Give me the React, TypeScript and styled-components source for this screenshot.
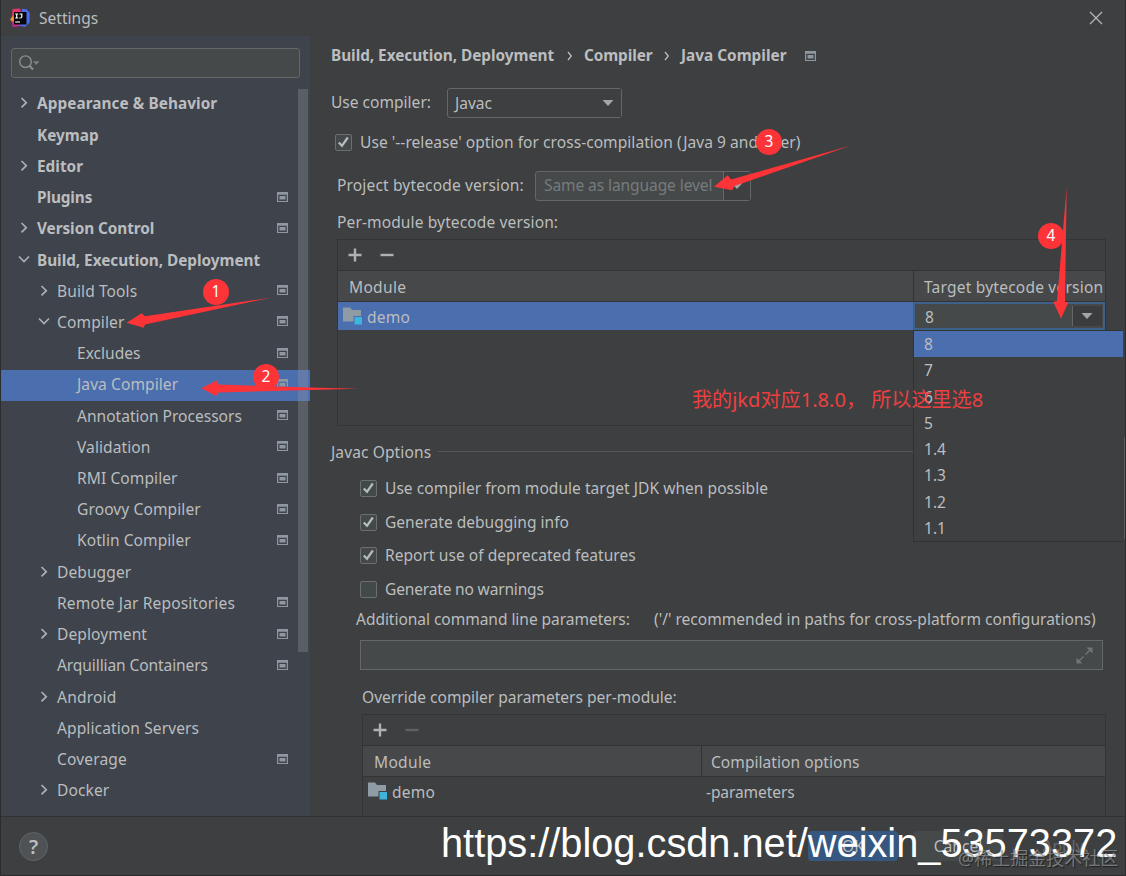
import React from 'react';
import styled, { createGlobalStyle, css } from 'styled-components';

const GlobalStyle = createGlobalStyle`
  * { box-sizing: border-box; }
  body {
    margin: 0;
    background: #3d3f40;
    color: #bbbdbf;
    font-family: 'Noto Sans', 'Noto Sans CJK SC', sans-serif;
    font-size: 15.55px;
    overflow: hidden;
  }
`;

const Window = styled.div`
  position: relative;
  display: flex;
  flex-direction: column;
  width: 1126px;
  height: 876px;
  background: #3d3f40;
  border: solid #2b2c2e;
  border-width: 0 1px 1px 1px;
  overflow: hidden;
`;

const Text = styled.span<{ $ls?: number; $bold?: boolean; $dim?: boolean }>`
  white-space: pre;
  line-height: 22px;
  letter-spacing: ${(p) => p.$ls ?? 0}px;
  font-weight: ${(p) => (p.$bold ? 700 : 400)};
  ${(p) => p.$bold && css`font-size: 15.35px;`}
  ${(p) => p.$dim && css`color: #777b7c;`}
`;

/* ---------- title bar ---------- */

const TitleBar = styled.header`
  display: flex;
  align-items: center;
  flex: none;
  height: 36px;
  padding: 0 22px 0 8px;
  svg:last-child { margin-left: auto; }
`;

const Title = styled(Text)`
  margin-left: 8px;
`;

/* ---------- body ---------- */

const Body = styled.div`
  display: flex;
  flex: none;
  height: 780px;
`;

const Sidebar = styled.aside`
  position: relative;
  display: flex;
  flex-direction: column;
  width: 309px;
  background: #3e434c;
`;

const SearchBox = styled.div`
  display: flex;
  align-items: center;
  flex: none;
  width: 289px;
  height: 30px;
  margin: 12px 0 10.9px 10px;
  padding-left: 6px;
  background: #45494a;
  border: 1px solid #646869;
  border-radius: 3px;
`;

const TreeRow = styled.div<{ $level: number; $selected?: boolean }>`
  display: flex;
  align-items: center;
  flex: none;
  height: 31.23px;
  padding: 0 22px 2.2px ${(p) => 15 + p.$level * 20}px;
  background: ${(p) => (p.$selected ? '#4b6eaf' : 'transparent')};
`;

const Chevron = styled.span`
  display: flex;
  width: 21px;
`;

const RowIcon = styled.span`
  display: flex;
  margin-left: auto;
  padding-bottom: 1px;
`;

const ScrollThumb = styled.div`
  position: absolute;
  left: 297px;
  top: 53px;
  width: 10px;
  height: 563px;
  background: rgba(150, 153, 155, 0.32);
`;

const Content = styled.main`
  display: flex;
  flex-direction: column;
  flex: 1;
  padding-left: 21px;
`;

const Line = styled.div<{ $h: number; $mt?: number; $pl?: number }>`
  display: flex;
  align-items: center;
  flex: none;
  height: ${(p) => p.$h}px;
  margin-top: ${(p) => p.$mt ?? 0}px;
  padding-left: ${(p) => p.$pl ?? 0}px;
`;

const Crumb = styled(Text)<{ $w: number }>`
  width: ${(p) => p.$w}px;
  padding-bottom: 2px;
`;

const Separator = styled.span`
  display: flex;
  justify-content: center;
  width: 30px;
  padding-left: 2px;
`;

const Label = styled(Text)<{ $w?: number }>`
  flex: none;
  width: ${(p) => (p.$w ? p.$w + 'px' : 'auto')};
  padding-bottom: 2px;
`;

const Combo = styled.div<{ $w: number; $filled?: boolean }>`
  display: flex;
  align-items: center;
  width: ${(p) => p.$w}px;
  height: 30px;
  padding-left: ${(p) => (p.$filled ? 8 : 7)}px;
  border: 1px solid #646869;
  border-radius: 3px;
  background: ${(p) => (p.$filled ? '#45494a' : '#3d3f40')};
`;

const ComboArrow = styled.span<{ $split?: boolean }>`
  display: flex;
  align-items: center;
  justify-content: center;
  width: 27px;
  height: 100%;
  margin-left: auto;
  background: #3d3f40;
  border-left: ${(p) => (p.$split ? '1px solid #646869' : 'none')};
`;

const Box = styled.span`
  display: flex;
  align-items: center;
  justify-content: center;
  flex: none;
  width: 17px;
  height: 17px;
  margin-right: 8px;
  background: #43494a;
  border: 1px solid #6b6f70;
  border-radius: 2px;
`;

const Table = styled.div<{ $ml: number; $h: number; $open?: boolean }>`
  display: flex;
  flex-direction: column;
  flex: none;
  width: ${(p) => 775 - p.$ml}px;
  height: ${(p) => p.$h}px;
  margin-left: ${(p) => p.$ml}px;
  border: 1px solid #323435;
  ${(p) => p.$open && css`border-bottom: none;`}
`;

const Toolbar = styled.div`
  display: flex;
  align-items: center;
  gap: 18px;
  flex: none;
  height: 31px;
  padding-left: 10px;
  border-bottom: 1px solid #323435;
`;

const HeadRow = styled.div`
  display: flex;
  flex: none;
  height: 31px;
  background: #464849;
  border-bottom: 1px solid #323435;
`;

const Cell = styled.div<{ $w?: number; $pl: number; $line?: boolean }>`
  position: relative;
  display: flex;
  align-items: center;
  flex: ${(p) => (p.$w ? 'none' : 1)};
  width: ${(p) => (p.$w ? p.$w + 'px' : 'auto')};
  padding-left: ${(p) => p.$pl}px;
  border-right: ${(p) => (p.$line ? '1px solid #323435' : 'none')};
  svg { margin-right: 4px; }
  span { padding-top: 2px; }
`;

const DataRow = styled.div<{ $selected?: boolean }>`
  display: flex;
  flex: none;
  height: 28px;
  ${(p) => p.$selected && css`background: #4b6eaf;`}
`;

const Editor = styled.div`
  position: relative;
  display: flex;
  align-items: center;
  flex: 1;
  padding-left: 10px;
  background: #45494a;
  border: 2px solid #3d6188;
  > span:first-child { padding-top: 2px; }
`;

const EditorArrow = styled.span`
  display: flex;
  align-items: center;
  justify-content: center;
  width: 30px;
  height: 20px;
  margin: 0 1px 0 auto;
  padding-right: 2px;
  background: #3a3c3e;
  border-left: 1px solid #646869;
`;

const Popup = styled.ul`
  position: absolute;
  left: -2px;
  top: 26px;
  z-index: 2;
  width: 210px;
  margin: 0;
  padding: 0;
  list-style: none;
  background: #3d3f40;
  border: solid #303233;
  border-width: 1px 0 1px 1px;
`;

const Option = styled.li<{ $selected?: boolean }>`
  display: flex;
  align-items: center;
  height: 26.25px;
  padding-left: 10px;
  background: ${(p) => (p.$selected ? '#4b6eaf' : 'transparent')};
`;

const Rule = styled.span`
  flex: 1;
  height: 1px;
  margin: 0 20px 3px 7px;
  background: #55585a;
`;

const Input = styled.div`
  display: flex;
  align-items: center;
  justify-content: flex-end;
  flex: none;
  width: 743px;
  height: 30px;
  margin-left: 29px;
  padding-right: 9px;
  background: #45494a;
  border: 1px solid #646869;
`;

const PaneThumb = styled.div`
  position: absolute;
  right: -1px;
  top: 437px;
  width: 2px;
  height: 102px;
  background: #5a5d5e;
`;

/* ---------- footer ---------- */

const Footer = styled.footer`
  display: flex;
  align-items: center;
  flex: 1;
  padding: 0 17px 0 18px;
  border-top: 1px solid #2f3132;
`;

const Help = styled.span`
  display: flex;
  align-items: center;
  justify-content: center;
  width: 29px;
  height: 29px;
  margin-right: auto;
  border: 1px solid #626567;
  border-radius: 50%;
  background: #4e5254;
  font: 600 20px 'Noto Sans', sans-serif;
`;

const Button = styled.span<{ $kind: 'primary' | 'plain' | 'disabled' }>`
  display: flex;
  align-items: center;
  justify-content: center;
  width: 90px;
  height: 30px;
  margin-left: 15px;
  border-radius: 4px;
  background: ${(p) => (p.$kind === 'primary' ? '#365880' : p.$kind === 'plain' ? '#45494a' : 'transparent')};
  color: ${(p) => (p.$kind === 'disabled' ? '#66696b' : '#bbbdbf')};
`;

/* ---------- overlays ---------- */

const Arrows = styled.svg`
  position: absolute;
  left: -1px;
  top: 0;
  z-index: 3;
`;

const Badge = styled.span<{ $x: number; $y: number }>`
  position: absolute;
  left: ${(p) => p.$x - 14}px;
  top: ${(p) => p.$y - 13}px;
  z-index: 4;
  width: 26px;
  height: 26px;
  border-radius: 50%;
  background: #fc3438;
  color: #fff;
  text-align: center;
  font-size: 15.5px;
  line-height: 24px;
`;

const Note = styled.span`
  position: absolute;
  left: 691px;
  top: 385px;
  z-index: 4;
  color: #ee3f40;
  font-size: 20.1px;
  line-height: 30px;
  white-space: pre;
`;

const UrlMark = styled.span`
  position: absolute;
  left: 440px;
  top: 820px;
  z-index: 5;
  color: #fff;
  font: 39.75px/46px 'Liberation Sans', sans-serif;
  white-space: pre;
`;

const SiteMark = styled.span`
  position: absolute;
  left: 957px;
  top: 845px;
  z-index: 6;
  color: rgba(190, 192, 194, 0.5);
  text-shadow: 1px 1px 1px rgba(0, 0, 0, 0.5);
  font-size: 18px;
  line-height: 26px;
  white-space: pre;
`;

/* ---------- icons ---------- */

const Logo = () => (
  <svg width="22" height="20" viewBox="0 0 22 20">
    <path d="M3.500 1 L11 0.500 L13 8 L7 13 L2 11.500 L3 8 Z" fill="#e8336d" />
    <path d="M1 11.500 L4 7.500 L7 14 L4 15 Z" fill="#f28a3c" />
    <path d="M3 13.500 L9 13 L13 18 L3.500 19 Z" fill="#c22c8f" />
    <path d="M13 0.800 L17.500 1.200 L20.800 5 L20.500 14.500 L16 19 L10 17.500 Z" fill="#4a6cf0" />
    <rect x="5" y="4" width="12.500" height="12.500" fill="#08080a" />
    <path d="M6.200 6 H9.200 M7.700 6 V10 M6.200 10 H9.200 M10.500 6 H12.800 V9 Q12.600 10.100 10.300 10" stroke="#fff" strokeWidth="1.200" fill="none" />
    <path d="M6.200 14 H11" stroke="#fff" strokeWidth="1.100" />
  </svg>
);

const Close = () => (
  <svg width="14" height="14" viewBox="0 0 14 14">
    <path d="M1 1 L13 13 M13 1 L1 13" stroke="#b4b6b8" strokeWidth="1.300" />
  </svg>
);

const SearchIcon = () => (
  <svg width="24" height="18" viewBox="0 0 24 18">
    <circle cx="7.500" cy="7.700" r="5.800" fill="none" stroke="#8b8f91" strokeWidth="1.400" />
    <path d="M11.500 11.700 L15 15.500" stroke="#8b8f91" strokeWidth="2" />
    <path d="M15 7.300 H21.500 L18.200 11 Z" fill="#7d8183" />
  </svg>
);

const Right = () => (
  <svg width="16" height="14" viewBox="0 0 16 14">
    <path d="M5.500 2 L10.300 6.700 L5.500 11.400" stroke="#adb0b3" strokeWidth="1.700" fill="none" />
  </svg>
);

const Down = () => (
  <svg width="16" height="14" viewBox="0 0 16 14">
    <path d="M3 3.500 L8 8.500 L13 3.500" stroke="#adb0b3" strokeWidth="1.700" fill="none" />
  </svg>
);

const Scope = () => (
  <svg width="11" height="10" viewBox="0 0 11 10">
    <path fillRule="evenodd" d="M0 0 H11 V10 H0 Z M1.200 2.700 V8.900 H9.800 V2.700 Z" fill="#8f979f" />
    <rect x="2.500" y="4" width="6" height="3.500" fill="#8f979f" />
  </svg>
);

const Tri = () => (
  <svg width="12" height="8" viewBox="0 0 12 8">
    <path d="M0.500 1 H11.500 L6 7 Z" fill="#a3a6a8" />
  </svg>
);

const Check = () => (
  <svg width="13" height="13" viewBox="0 0 13 13">
    <path d="M1.800 6.500 L5 9.800 L10.800 1.500" stroke="#b8babb" strokeWidth="2.300" fill="none" />
  </svg>
);

const Plus = () => (
  <svg width="14" height="14" viewBox="0 0 14 14">
    <path d="M7 0.500 V13.500 M0.500 7 H13.500" stroke="#afb1b3" strokeWidth="2.400" />
  </svg>
);

const Minus = ({ dim }: { dim?: boolean }) => (
  <svg width="14" height="14" viewBox="0 0 14 14">
    <path d="M0.500 7 H13.500" stroke={dim ? '#5f6264' : '#afb1b3'} strokeWidth="2.400" />
  </svg>
);

const Folder = () => (
  <svg width="20" height="18" viewBox="0 0 20 18">
    <path d="M0 0.500 H7 L9 3 H18 V9 H10.500 V14.500 H0 Z" fill="#8f9ba5" />
    <rect x="11.500" y="10" width="7.500" height="7.500" fill="#3fb4dc" />
  </svg>
);

const Expand = () => (
  <svg width="17" height="17" viewBox="0 0 17 17">
    <path d="M10.500 0.500 H16.500 V6.500 Z M0.500 10.500 V16.500 H6.500 Z" fill="#6f7476" />
    <path d="M14 3 L9.500 7.500 M3 14 L7.500 9.500" stroke="#6f7476" strokeWidth="1.400" />
  </svg>
);

const CrumbArrow = () => (
  <svg width="6" height="10" viewBox="0 0 6 10">
    <path d="M1 1 L4.300 5 L1 9" stroke="#bbbdbf" strokeWidth="1.300" fill="none" />
  </svg>
);

/* ---------- data ---------- */

type Node = { t: string; l: number; a?: 'r' | 'd'; s?: boolean; b?: boolean; sel?: boolean; ls?: number };

const tree: Node[] = [
  { t: 'Appearance & Behavior', l: 0, a: 'r', b: true, ls: 0.06 },
  { t: 'Keymap', l: 0, b: true },
  { t: 'Editor', l: 0, a: 'r', b: true },
  { t: 'Plugins', l: 0, b: true, s: true, ls: -0.1 },
  { t: 'Version Control', l: 0, a: 'r', b: true, s: true, ls: -0.07 },
  { t: 'Build, Execution, Deployment', l: 0, a: 'd', b: true, ls: -0.04 },
  { t: 'Build Tools', l: 1, a: 'r', s: true, ls: 0.1 },
  { t: 'Compiler', l: 1, a: 'd', s: true, ls: 0.12 },
  { t: 'Excludes', l: 2, s: true },
  { t: 'Java Compiler', l: 2, s: true, sel: true, ls: 0.08 },
  { t: 'Annotation Processors', l: 2, s: true },
  { t: 'Validation', l: 2, s: true, ls: 0.08 },
  { t: 'RMI Compiler', l: 2, s: true, ls: 0.08 },
  { t: 'Groovy Compiler', l: 2, s: true, ls: 0.1 },
  { t: 'Kotlin Compiler', l: 2, s: true, ls: 0.06 },
  { t: 'Debugger', l: 1, a: 'r', ls: 0.08 },
  { t: 'Remote Jar Repositories', l: 1, s: true, ls: 0.14 },
  { t: 'Deployment', l: 1, a: 'r', s: true, ls: 0.08 },
  { t: 'Arquillian Containers', l: 1, s: true, ls: -0.1 },
  { t: 'Android', l: 1, a: 'r', ls: 0.2 },
  { t: 'Application Servers', l: 1, ls: 0.1 },
  { t: 'Coverage', l: 1, s: true, ls: 0.15 },
  { t: 'Docker', l: 1, a: 'r', ls: 0.1 },
];

const versions = ['8', '7', '6', '5', '1.4', '1.3', '1.2', '1.1'];

type CheckLineProps = { label: string; on?: boolean; mt: number; pl: number; ls?: number };

const CheckLine = ({ label, on, mt, pl, ls }: CheckLineProps) => (
  <Line $h={18} $mt={mt} $pl={pl}>
    <Box>{on && <Check />}</Box>
    <Text $ls={ls}>{label}</Text>
  </Line>
);

export default function App() {
  return (
    <>
      <GlobalStyle />
      <Window>
        <TitleBar>
          <Logo />
          <Title>Settings</Title>
          <Close />
        </TitleBar>
        <Body>
          <Sidebar>
            <SearchBox><SearchIcon /></SearchBox>
            {tree.map((n) => (
              <TreeRow key={n.t} $level={n.l} $selected={n.sel}>
                <Chevron>{n.a === 'r' ? <Right /> : n.a === 'd' ? <Down /> : null}</Chevron>
                <Text $bold={n.b} $ls={n.ls}>{n.t}</Text>
                {n.s && <RowIcon><Scope /></RowIcon>}
              </TreeRow>
            ))}
            <ScrollThumb />
          </Sidebar>
          <Content>
            <Line $h={22} $mt={9}>
              <Crumb $bold $w={223} $ls={-0.04}>Build, Execution, Deployment</Crumb>
              <Separator><CrumbArrow /></Separator>
              <Crumb $bold $w={67} $ls={-0.1}>Compiler</Crumb>
              <Separator><CrumbArrow /></Separator>
              <Crumb $bold $w={124}>Java Compiler</Crumb>
              <Scope />
            </Line>
            <Line $h={30} $mt={21}>
              <Label $w={116}>Use compiler:</Label>
              <Combo $w={175}><Text>Javac</Text><ComboArrow><Tri /></ComboArrow></Combo>
            </Line>
            <CheckLine label="Use '--release' option for cross-compilation (Java 9 and later)" on mt={15} pl={4} ls={0.04} />
            <Line $h={30} $mt={20} $pl={6}>
              <Label $w={198} $ls={0.14}>Project bytecode version:</Label>
              <Combo $w={216} $filled><Label $dim $ls={-0.1}>Same as language level</Label><ComboArrow $split><Tri /></ComboArrow></Combo>
            </Line>
            <Line $h={22} $mt={11} $pl={6}><Label $ls={0.11}>Per-module bytecode version:</Label></Line>
            <Line $h={5} />
            <Table $ml={6} $h={187}>
              <Toolbar><Plus /><Minus /></Toolbar>
              <HeadRow>
                <Cell $w={576} $pl={11} $line><Text $ls={0.3}>Module</Text></Cell>
                <Cell $pl={10}><Text $ls={0.2}>Target bytecode version</Text></Cell>
              </HeadRow>
              <DataRow $selected>
                <Cell $w={575} $pl={5}><Folder /><Text $ls={0.2}>demo</Text></Cell>
                <Editor>
                  <Text>8</Text>
                  <EditorArrow><Tri /></EditorArrow>
                  <Popup>
                    {versions.map((v, i) => (
                      <Option key={v} $selected={i === 0}><Text>{v}</Text></Option>
                    ))}
                  </Popup>
                </Editor>
              </DataRow>
            </Table>
            <Line $h={22} $mt={16}><Label $ls={0.1}>Javac Options</Label><Rule /></Line>
            <CheckLine label="Use compiler from module target JDK when possible" on mt={15} pl={29} ls={0.03} />
            <CheckLine label="Generate debugging info" on mt={16} pl={29} />
            <CheckLine label="Report use of deprecated features" on mt={15} pl={29} ls={0.04} />
            <CheckLine label="Generate no warnings" mt={16} pl={29} ls={-0.18} />
            <Line $h={22} $mt={11} $pl={25}>
              <Label $w={298} $ls={-0.05}>Additional command line parameters:</Label>
              <Label>('/' recommended in paths for cross-platform configurations)</Label>
            </Line>
            <Line $h={9} />
            <Input><Expand /></Input>
            <Line $h={22} $mt={17} $pl={31}><Label>Override compiler parameters per-module:</Label></Line>
            <Line $h={5} />
            <Table $ml={31} $h={102} $open>
              <Toolbar><Plus /><Minus dim /></Toolbar>
              <HeadRow>
                <Cell $w={339} $pl={11} $line><Text $ls={0.3}>Module</Text></Cell>
                <Cell $pl={9}><Text $ls={0.04}>Compilation options</Text></Cell>
              </HeadRow>
              <DataRow>
                <Cell $w={338} $pl={5}><Folder /><Text $ls={0.2}>demo</Text></Cell>
                <Cell $pl={5}><Text $ls={-0.1}>-parameters</Text></Cell>
              </DataRow>
            </Table>
          </Content>
        </Body>
        <Footer>
          <Help>?</Help>
          <Button $kind="primary">OK</Button>
          <Button $kind="plain">Cancel</Button>
          <Button $kind="disabled">Apply</Button>
        </Footer>
        <PaneThumb />
        <Arrows width="1126" height="876" viewBox="0 0 1126 876" fill="#fc3438">
          <path d="M126.500 322.700 L141.700 313.300 L145 316.300 L271.700 297.500 L145 324.500 L143.700 327.700 Z" />
          <path d="M201.300 388.300 L216.700 380.500 L218.500 384.500 L310 387.500 L359 388.800 L310 389.900 L218.500 392.500 L216 396 Z" />
          <path d="M714 186.700 L727.700 175.300 L731 179.500 L851 145.500 L734.500 186 L732 190.300 Z" />
          <path d="M1061 318.500 L1053.200 301.700 L1057 301 L1066.700 187 L1065 302 L1068.500 302.300 Z" />
        </Arrows>
        <Badge $x={216} $y={292}>1</Badge>
        <Badge $x={266} $y={377}>2</Badge>
        <Badge $x={769} $y={142}>3</Badge>
        <Badge $x={1051} $y={236}>4</Badge>
        <Note>我的jkd对应1.8.0， 所以这里选8</Note>
        <UrlMark>https://blog.csdn.net/weixin_53573372</UrlMark>
        <SiteMark>@稀土掘金技术社区</SiteMark>
      </Window>
    </>
  );
}
